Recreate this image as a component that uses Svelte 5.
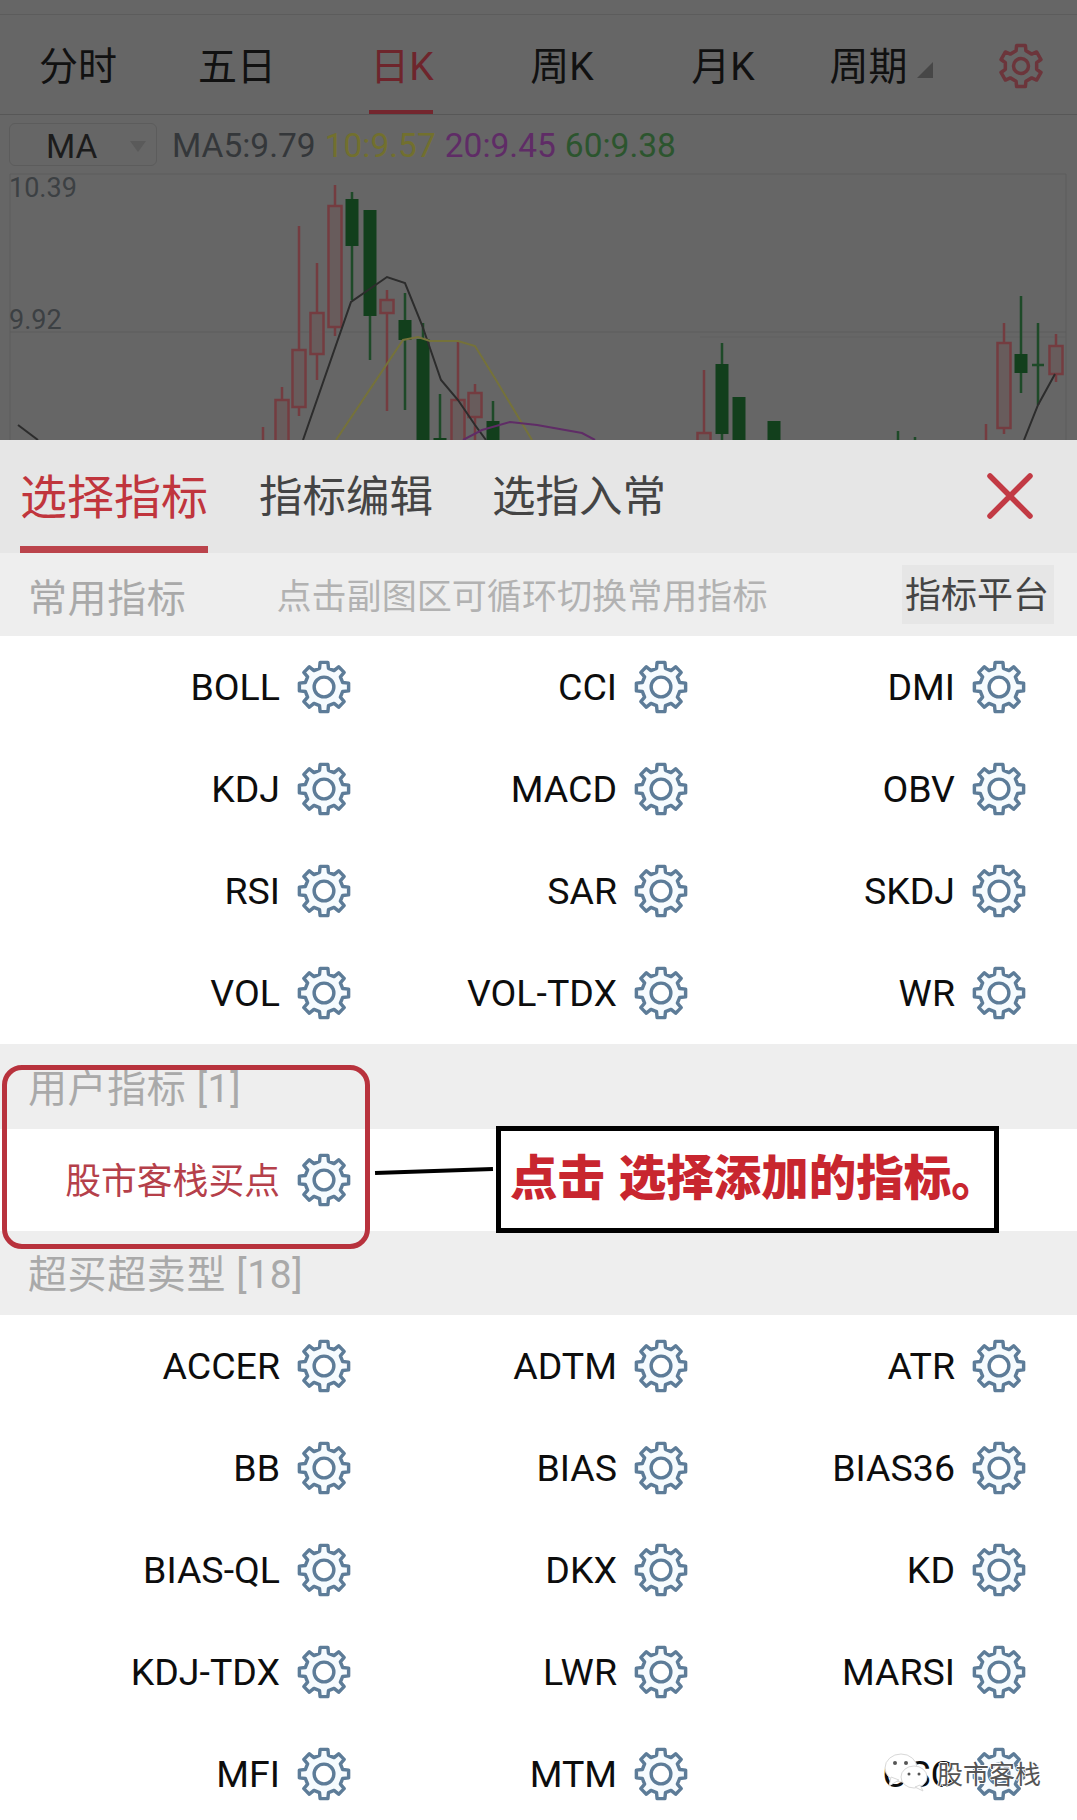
<script>
  const tabs = [
    { label: "分时" },
    { label: "五日" },
    { label: "日K", active: true },
    { label: "周K" },
    { label: "月K" },
  ];

  // page-space coordinates, chart is clipped at the sheet
  const candles = [
    { x: 282, top: 400, bottom: 450, high: 387, low: 450, up: true },
    { x: 299, top: 350, bottom: 407, high: 226, low: 416, up: true },
    { x: 317, top: 313, bottom: 354, high: 263, low: 380, up: true },
    { x: 335, top: 206, bottom: 327, high: 185, low: 336, up: true },
    { x: 352, top: 199, bottom: 246, high: 192, low: 300 },
    { x: 370, top: 210, bottom: 316, high: 210, low: 360 },
    { x: 387, top: 300, bottom: 313, high: 290, low: 411, up: true },
    { x: 405, top: 320, bottom: 340, high: 293, low: 410 },
    { x: 423, top: 339, bottom: 450, high: 323, low: 450 },
    { x: 440, top: 438, bottom: 450, high: 394, low: 450 },
    { x: 458, top: 400, bottom: 450, high: 341, low: 450, up: true },
    { x: 475, top: 393, bottom: 417, high: 384, low: 450, up: true },
    { x: 493, top: 421, bottom: 450, high: 401, low: 450 },
    { x: 704, top: 433, bottom: 450, high: 370, low: 450, up: true },
    { x: 722, top: 364, bottom: 434, high: 343, low: 450 },
    { x: 739, top: 397, bottom: 450, high: 397, low: 450 },
    { x: 774, top: 421, bottom: 450, high: 421, low: 450 },
    { x: 1004, top: 343, bottom: 428, high: 323, low: 434, up: true },
    { x: 1021, top: 354, bottom: 373, high: 296, low: 393 },
    { x: 1056, top: 346, bottom: 374, high: 334, low: 382, up: true },
  ];

  const commonList = ["BOLL", "CCI", "DMI", "KDJ", "MACD", "OBV", "RSI", "SAR", "SKDJ", "VOL", "VOL-TDX", "WR"];
  const overboughtList = ["ACCER", "ADTM", "ATR", "BB", "BIAS", "BIAS36", "BIAS-QL", "DKX", "KD", "KDJ-TDX", "LWR", "MARSI", "MFI", "MTM", "OSC"];

  // gear outline with rounded-off teeth, centred on 0,0
  function gearPath(teeth, outer, root) {
    const pts = [];
    const step = (Math.PI * 2) / teeth;
    for (let i = 0; i < teeth; i++) {
      const a = i * step - Math.PI / 2;
      const t = step * 0.2;
      const s = step * 0.3;
      pts.push([a - s, root], [a - t, outer], [a + t, outer], [a + s, root]);
    }
    const xy = pts.map(([a, r]) => `${(Math.cos(a) * r).toFixed(2)} ${(Math.sin(a) * r).toFixed(2)}`);
    return "M" + xy.join("L") + "Z";
  }

  const gear8 = gearPath(8, 24, 18.5);
  const gear6 = gearPath(6, 21, 16);
</script>

{#snippet gear()}
  <svg class="gear" viewBox="-26 -26 52 52" aria-hidden="true">
    <path d={gear8} />
    <circle r="9.5" />
  </svg>
{/snippet}

{#snippet item(name, custom)}
  <div class="item">
    <span class="item-name" class:custom>{name}</span>
    {@render gear()}
  </div>
{/snippet}

<div class="page">
  <div class="behind">
    <div class="status-strip"></div>

    <nav class="period-bar">
      {#each tabs as tab}
        <div class="period" class:active={tab.active}>{tab.label}</div>
      {/each}
      <div class="period period-more">周期<span class="corner"></span></div>
      <div class="period-gear">
        <svg viewBox="-24 -24 48 48" width="48" height="48" aria-hidden="true">
          <path d={gear6} />
          <circle r="7.5" />
        </svg>
      </div>
    </nav>

    <div class="ma-row">
      <div class="ma-select">MA<span class="caret"></span></div>
      <span class="ma ma5">MA5:9.79</span>
      <span class="ma ma10">10:9.57</span>
      <span class="ma ma20">20:9.45</span>
      <span class="ma ma60">60:9.38</span>
    </div>

    <div class="chart">
      <span class="price price-high">10.39</span>
      <span class="price price-mid">9.92</span>
      <svg viewBox="0 173 1077 267" width="1077" height="267" aria-hidden="true">
        <path class="grid-line" d="M10 440V174H1066V440" />
        <path class="grid-line" d="M10 332H1066" />
        <path class="grid-line faint" d="M700 337H1066" />

        {#each candles as c}
          <line class={c.up ? "wick-up" : "wick-down"} x1={c.x} x2={c.x} y1={c.high} y2={c.low} />
          <rect
            class={c.up ? "body-up" : "body-down"}
            x={c.x - 6.5}
            y={c.top}
            width="13"
            height={c.bottom - c.top}
          />
        {/each}
        <line class="wick-up" x1="263" x2="263" y1="427" y2="440" />
        <line class="wick-down" x1="898" x2="898" y1="431" y2="440" />
        <line class="wick-down" x1="915" x2="915" y1="437" y2="440" />
        <line class="wick-up" x1="986" x2="986" y1="424" y2="440" />
        <line class="wick-down" x1="1038" x2="1038" y1="323" y2="405" />
        <line class="wick-down" x1="1032" x2="1044" y1="365" y2="365" />

        <polyline class="ma-line line5" points="18,425 38,440" />
        <polyline class="ma-line line5" points="303,440 351,302 387,277 405,283 422,325 441,380 458,400 475,425 486,440" />
        <polyline class="ma-line line5" points="1024,440 1038,405 1055,374" />
        <polyline class="ma-line line10" points="336,440 403,340 418,337 430,341 458,341 475,346 496,380 532,440" />
        <polyline class="ma-line line20" points="463,440 482,430 510,422 537,425 582,433 595,440" />
      </svg>
    </div>
  </div>

  <section class="sheet">
    <header class="sheet-head">
      <div class="sheet-tab active">选择指标</div>
      <div class="sheet-tab second">指标编辑</div>
      <div class="sheet-tab third">选指入常</div>
      <svg class="close" viewBox="0 0 46 46" width="46" height="46" aria-hidden="true">
        <path d="M3 3L43 43M43 3L3 43" />
      </svg>
    </header>

    <div class="sub-head">
      <span class="section-label">常用指标</span>
      <span class="hint">点击副图区可循环切换常用指标</span>
      <span class="platform">指标平台</span>
    </div>

    <div class="items">
      {#each commonList as name}
        {@render item(name)}
      {/each}
    </div>

    <div class="section-head first"><span class="section-label">用户指标 [1]</span></div>
    <div class="items">
      {@render item("股市客栈买点", true)}
    </div>

    <div class="section-head"><span class="section-label">超买超卖型 [18]</span></div>
    <div class="items">
      {#each overboughtList as name}
        {@render item(name)}
      {/each}
    </div>
  </section>

  <!-- annotations pasted over the screenshot -->
  <div class="mark-ring"></div>
  <div class="mark-line"></div>
  <div class="callout">点击 选择添加的指标。</div>

  <div class="watermark">
    <svg viewBox="0 0 46 40" width="46" height="40" aria-hidden="true">
      <ellipse class="bubble" cx="18" cy="16" rx="16" ry="14" />
      <path class="bubble" d="M8 25L6 34L16 28Z" />
      <ellipse class="bubble" cx="31" cy="25" rx="13" ry="11" />
      <path class="bubble" d="M37 33L40 39L32 35Z" />
      <circle class="dot" cx="12" cy="11" r="2" />
      <circle class="dot" cx="23" cy="11" r="2" />
      <circle class="dot" cx="26" cy="22" r="1.5" />
      <circle class="dot" cx="36" cy="22" r="1.5" />
    </svg>
    <span>股市客栈</span>
  </div>
</div>

<style>
  :global(body) {
    margin: 0;
  }

  .page {
    position: relative;
    width: 1077px;
    height: 1820px;
    overflow: hidden;
    background: #fff;
    font-family: Roboto, "Noto Sans CJK SC", sans-serif;
  }

  .behind {
    height: 440px;
    background: #666;
    overflow: hidden;
  }

  .status-strip {
    height: 15px;
    border-bottom: 1px solid #5c5c5c;
    box-sizing: border-box;
  }

  .period-bar {
    display: grid;
    grid-template-columns: 156px 162px 168px 152px 170px 146px 123px;
    height: 100px;
    border-bottom: 1px solid #575757;
    box-sizing: border-box;
  }

  .period {
    position: relative;
    display: flex;
    align-items: center;
    justify-content: center;
    font-size: 39px;
    color: #111;
    padding-bottom: 3px;
  }

  .period.active {
    color: #6e252c;
  }

  .period.active::after {
    content: "";
    position: absolute;
    left: 51px;
    width: 64px;
    bottom: 0;
    height: 4px;
    background: #74262e;
  }

  .corner {
    width: 0;
    height: 0;
    margin: 14px 0 0 9px;
    border-style: solid;
    border-width: 0 0 16px 16px;
    border-color: transparent transparent #474747 transparent;
  }

  .period-gear {
    display: flex;
    align-items: center;
    justify-content: center;
    padding: 3px 0 0 10px;
  }

  .period-gear path,
  .period-gear circle {
    fill: none;
    stroke: #6c353b;
    stroke-width: 3.5;
    stroke-linejoin: round;
  }

  .ma-row {
    display: flex;
    align-items: center;
    height: 58px;
    padding: 3px 0 0 9px;
    box-sizing: border-box;
    font-size: 33.5px;
  }

  .ma-select {
    position: relative;
    box-sizing: border-box;
    width: 148px;
    height: 43px;
    margin: -3px 15px 0 0;
    padding-left: 36px;
    line-height: 46px;
    border: 1px solid #5c5c5c;
    border-radius: 6px;
    color: #1c1c1c;
  }

  .caret {
    position: absolute;
    right: 10px;
    top: 17px;
    width: 0;
    height: 0;
    border-style: solid;
    border-width: 11px 8px 0 8px;
    border-color: #5a5a5a transparent transparent transparent;
  }

  .ma {
    margin-right: 9px;
  }

  .ma5 {
    color: #34373a;
  }

  .ma10 {
    color: #72702e;
  }

  .ma20 {
    color: #5f2c66;
  }

  .ma60 {
    color: #2c552e;
  }

  .chart {
    position: relative;
    height: 267px;
  }

  .chart svg {
    display: block;
  }

  .price {
    position: absolute;
    left: 9px;
    font-size: 27px;
    color: #3c4043;
  }

  .price-high {
    top: -1px;
  }

  .price-mid {
    top: 131px;
  }

  .grid-line {
    fill: none;
    stroke: #5c5c5c;
    stroke-width: 1;
  }

  .grid-line.faint {
    stroke: #606060;
  }

  .wick-up {
    stroke: #743c40;
    stroke-width: 2.5;
  }

  .wick-down {
    stroke: #1e4a28;
    stroke-width: 2.5;
  }

  .body-up {
    fill: #685c5c;
    stroke: #743c40;
    stroke-width: 2.5;
  }

  .body-down {
    fill: #123f1c;
    stroke: none;
  }

  .ma-line {
    fill: none;
    stroke-width: 2;
  }

  .line5 {
    stroke: #2c2c2c;
  }

  .line10 {
    stroke: #75723a;
  }

  .line20 {
    stroke: #5f2c66;
  }

  .sheet-head {
    position: relative;
    display: flex;
    height: 113px;
    box-sizing: border-box;
    padding: 0 0 0 20px;
    background: #e6e6e6;
  }

  .sheet-tab {
    display: flex;
    align-items: center;
    height: 100%;
    padding-bottom: 6px;
    box-sizing: border-box;
    font-size: 43.5px;
    color: #444;
  }

  .sheet-tab.active {
    font-size: 47px;
    color: #c0353d;
    border-bottom: 7px solid #bb444c;
    padding-bottom: 0;
  }

  .second {
    margin-left: 51px;
  }

  .third {
    margin-left: 59px;
  }

  .close {
    margin: 33px 44px 0 auto;
  }

  .close path {
    fill: none;
    stroke: #c23a44;
    stroke-width: 5.5;
    stroke-linecap: round;
  }

  .sub-head {
    display: flex;
    align-items: center;
    height: 83px;
    padding-left: 28px;
    background: #eee;
  }

  .section-label {
    font-size: 39px;
    color: #a9a9a9;
    letter-spacing: 0.6px;
  }

  .hint {
    margin-left: 90px;
    margin-bottom: 2px;
    font-size: 35.1px;
    color: #b2b2b2;
  }

  .platform {
    margin-left: auto;
    margin-right: 23px;
    height: 59px;
    line-height: 63px;
    padding: 0 5px 0 3px;
    background: #e6e6e6;
    font-size: 36px;
    color: #444;
  }

  .items {
    display: grid;
    grid-template-columns: 351px 337px 338px;
    grid-auto-rows: 102px;
    background: #fff;
  }

  .item {
    display: flex;
    align-items: center;
    justify-content: flex-end;
    gap: 17px;
  }

  .item-name {
    font-size: 37.5px;
    color: #0d0d0d;
  }

  .item-name.custom {
    font-size: 35.8px;
    color: #b5404a;
    margin-bottom: 5px;
  }

  .gear {
    width: 54px;
    height: 54px;
    flex: none;
  }

  .gear path {
    fill: #f6fbfe;
  }

  .gear circle {
    fill: #fff;
  }

  .gear path,
  .gear circle {
    stroke: #5d7c98;
    stroke-width: 3.3;
    stroke-linejoin: round;
  }

  .section-head {
    display: flex;
    align-items: center;
    height: 84px;
    padding: 0 0 4px 28px;
    box-sizing: border-box;
    background: #eee;
  }

  .section-head.first {
    height: 85px;
    padding-bottom: 3px;
  }

  .mark-ring {
    position: absolute;
    left: 2px;
    top: 1065px;
    width: 368px;
    height: 184px;
    box-sizing: border-box;
    border: 5px solid #b8323d;
    border-radius: 20px;
  }

  .mark-line {
    position: absolute;
    left: 375px;
    top: 1169px;
    width: 118px;
    height: 4px;
    background: #000;
    transform: rotate(-2deg);
  }

  .callout {
    position: absolute;
    left: 496px;
    top: 1126px;
    width: 503px;
    height: 107px;
    box-sizing: border-box;
    border: 5px solid #000;
    background: #fff;
    padding-left: 9px;
    line-height: 96px;
    font-size: 47.5px;
    font-weight: 900;
    word-spacing: 2px;
    white-space: nowrap;
    color: #c8262f;
  }

  .watermark {
    position: absolute;
    left: 883px;
    top: 1752px;
    display: flex;
    align-items: center;
    gap: 8px;
    font-size: 26px;
    color: #555;
    text-shadow: 1px 0 #fff, -1px 0 #fff, 0 1px #fff, 0 -1px #fff;
  }

  .bubble {
    fill: #fff;
    stroke: #d8d8d8;
    stroke-width: 1;
  }

  .dot {
    fill: #555;
  }
</style>
